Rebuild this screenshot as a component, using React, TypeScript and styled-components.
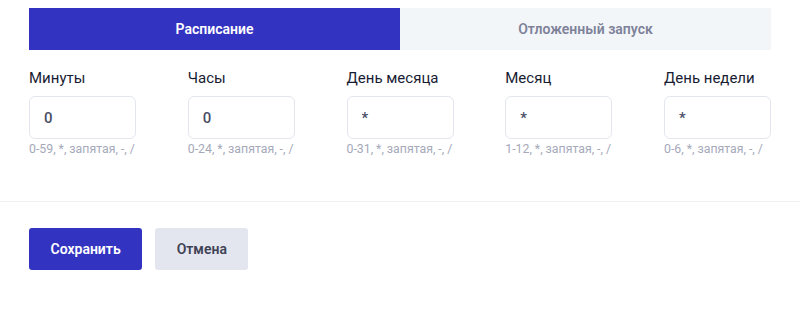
import React, { useState } from 'react';
import styled, { createGlobalStyle } from 'styled-components';

const GlobalStyle = createGlobalStyle`
  body {
    margin: 0;
    background: #fff;
    font-family: Roboto, "Noto Sans", sans-serif;
  }
`;

type TField = {
  label: string;
  value: string;
  hint: string;
};

const fields: TField[] = [
  { label: 'Минуты', value: '0', hint: '0-59, *, запятая, -, /' },
  { label: 'Часы', value: '0', hint: '0-24, *, запятая, -, /' },
  { label: 'День месяца', value: '*', hint: '0-31, *, запятая, -, /' },
  { label: 'Месяц', value: '*', hint: '1-12, *, запятая, -, /' },
  { label: 'День недели', value: '*', hint: '0-6, *, запятая, -, /' },
];

const App = () => {
  const [tab, setTab] = useState(0);
  const [values, setValues] = useState(fields.map((f) => f.value));

  return (
    <>
      <GlobalStyle />
      <Page>
        <Body>
          <Tabs>
            <Tab $active={tab === 0} onClick={() => setTab(0)}>
              Расписание
            </Tab>
            <Tab $active={tab === 1} onClick={() => setTab(1)}>
              Отложенный запуск
            </Tab>
          </Tabs>
          <Fields>
            {fields.map((f, i) => (
              <Field key={f.label}>
                <Label>{f.label}</Label>
                <Input
                  value={values[i]}
                  onChange={(e) =>
                    setValues((prev) =>
                      prev.map((v, j) => (j === i ? e.target.value : v))
                    )
                  }
                />
                <Hint>{f.hint}</Hint>
              </Field>
            ))}
          </Fields>
        </Body>
        <Footer>
          <Button $primary>Сохранить</Button>
          <Button>Отмена</Button>
        </Footer>
      </Page>
    </>
  );
};

export default App;

const Page = styled.div`
  display: flex;
  flex-direction: column;
  width: 800px;
`;

const Body = styled.div`
  padding: 8px 29px 0;
  height: 202px;
  box-sizing: border-box;
  border-bottom: 1px solid #eff2f5;
`;

const Tabs = styled.div`
  display: flex;
  height: 42px;
`;

const Tab = styled.div<{ $active?: boolean }>`
  flex: 1;
  display: flex;
  align-items: center;
  justify-content: center;
  font-size: 14px;
  font-weight: 600;
  cursor: pointer;
  background: ${(p) => (p.$active ? '#3333c1' : '#f3f6f9')};
  color: ${(p) => (p.$active ? '#ffffff' : '#7e8299')};
`;

const Fields = styled.div`
  display: flex;
  justify-content: space-between;
  margin-top: 19px;
`;

const Field = styled.div`
  display: flex;
  flex-direction: column;
  width: 107px;
`;

const Label = styled.label`
  font-size: 15px;
  font-weight: 400;
  color: #181c32;
  line-height: 18px;
  white-space: nowrap;
  margin-bottom: 9px;
`;

const Input = styled.input`
  width: 107px;
  height: 43px;
  box-sizing: border-box;
  border: 1px solid #e4e6ef;
  border-radius: 6px;
  padding: 0 14px;
  font-family: Roboto, sans-serif;
  font-size: 15px;
  font-weight: 500;
  color: #4a4e66;
  outline: none;
`;

const Hint = styled.div`
  margin-top: 3px;
  font-size: 12.3px;
  color: #a5a9ba;
  white-space: nowrap;
`;

const Footer = styled.div`
  display: flex;
  gap: 13px;
  padding: 26px 29px 0;
`;

const Button = styled.button<{ $primary?: boolean }>`
  height: 42px;
  padding: 0 21.5px;
  border: none;
  border-radius: 3px;
  font-family: Roboto, sans-serif;
  font-size: 14px;
  font-weight: 600;
  cursor: pointer;
  background: ${(p) => (p.$primary ? '#3333c1' : '#e4e6ef')};
  color: ${(p) => (p.$primary ? '#ffffff' : '#3f4254')};
`;
